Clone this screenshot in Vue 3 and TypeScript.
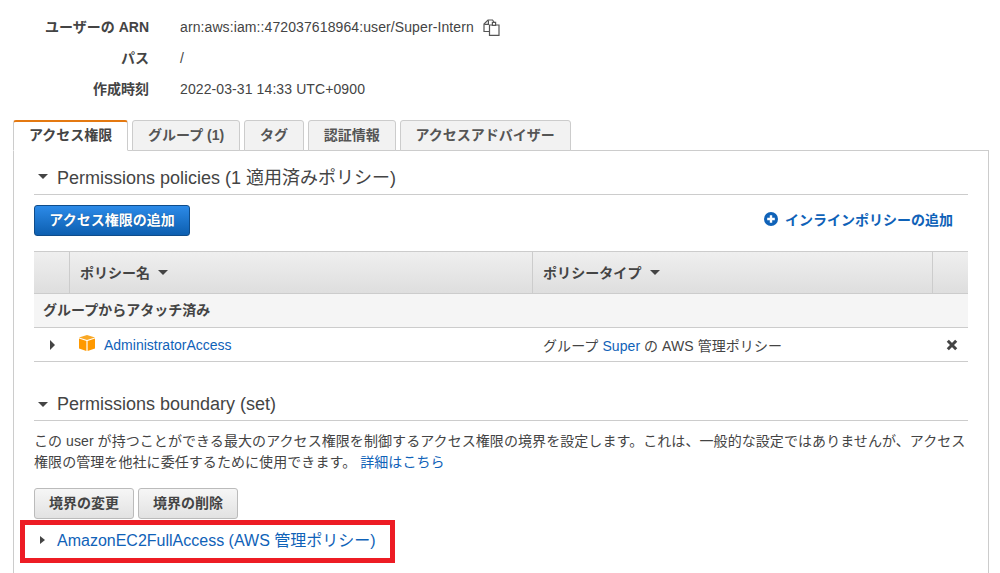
<script setup lang="ts">
const meta = [
  { label: 'ユーザーの ARN', value: 'arn:aws:iam::472037618964:user/Super-Intern', copy: true },
  { label: 'パス', value: '/', copy: false },
  { label: '作成時刻', value: '2022-03-31 14:33 UTC+0900', copy: false },
]
const tabs = ['アクセス権限', 'グループ (1)', 'タグ', '認証情報', 'アクセスアドバイザー']
</script>

<template>
  <div class="page">
    <dl class="meta">
      <div v-for="m in meta" :key="m.label" class="meta-row">
        <dt>{{ m.label }}</dt>
        <dd>
          {{ m.value }}
          <svg v-if="m.copy" class="copy" width="17" height="17" viewBox="0 0 17 17" fill="none" stroke="#555" stroke-width="1.2">
            <path d="M6 12.5H1V5L5 1H9.5L11 3" />
            <path d="M1.2 5.4H5.4V1.2" />
            <path d="M6.5 6H16V16.4H6.5Z" fill="#fff" />
            <path d="M9.4 3.4h3.2V6.4H9.4z" fill="#fff" />
          </svg>
        </dd>
      </div>
    </dl>

    <div class="tabs">
      <div v-for="(t, i) in tabs" :key="t" class="tab" :class="{ active: i === 0 }">{{ t }}</div>
    </div>

    <div class="panel">
      <h3 class="section-title"><span class="caret-down"></span>Permissions policies (1 適用済みポリシー)</h3>

      <div class="actions">
        <button class="btn primary">アクセス権限の追加</button>
        <a class="inline-add">
          <svg width="14" height="14" viewBox="0 0 14 14">
            <circle cx="7" cy="7" r="7" fill="#0f62b8" />
            <path d="M3.2 7h7.6M7 3.2v7.6" stroke="#fff" stroke-width="2.4" />
          </svg>
          <span>インラインポリシーの追加</span>
        </a>
      </div>

      <div class="table">
        <div class="thead">
          <div class="c-exp"></div>
          <div class="c-name"><span class="head-label">ポリシー名</span><span class="sort"></span></div>
          <div class="c-type"><span class="head-label">ポリシータイプ</span><span class="sort"></span></div>
          <div class="c-act"></div>
        </div>
        <div class="group">グループからアタッチ済み</div>
        <div class="trow">
          <div class="c-exp"><span class="caret-right"></span></div>
          <div class="c-name">
            <svg class="cube" width="16" height="16" viewBox="0 0 16 16">
              <path d="M8 0 16 2.6 8 5 0 2.6Z" fill="#f9a825" />
              <path d="M0 3.6 7.4 5.9V16L0 13.6Z" fill="#ff9900" />
              <path d="M16 3.6 8.6 5.9V16L16 13.6Z" fill="#ff9900" />
            </svg>
            <a>AdministratorAccess</a>
          </div>
          <div class="c-type">グループ <a>Super</a> の AWS 管理ポリシー</div>
          <div class="c-act">
            <svg width="12" height="12" viewBox="0 0 12 12"><path d="M1.8 1.8 10.2 10.2M10.2 1.8 1.8 10.2" stroke="#444" stroke-width="3" /></svg>
          </div>
        </div>
      </div>

      <h3 class="section-title second"><span class="caret-down"></span>Permissions boundary (set)</h3>
      <p class="desc">この user が持つことができる最大のアクセス権限を制御するアクセス権限の境界を設定します。これは、一般的な設定ではありませんが、アクセス権限の管理を他社に委任するために使用できます。 <a>詳細はこちら</a></p>

      <div class="btn-row">
        <button class="btn">境界の変更</button>
        <button class="btn">境界の削除</button>
      </div>

      <div class="boundary">
        <div class="highlight"></div>
        <span class="caret-right small"></span>
        <a>AmazonEC2FullAccess (AWS 管理ポリシー)</a>
      </div>
    </div>
  </div>
</template>

<style>
html, body { margin: 0; background: #fff; overflow: hidden; }
</style>

<style scoped>
.page {
  width: 1000px;
  height: 573px;
  overflow: hidden;
  padding: 17px 11px 0 13px;
  box-sizing: border-box;
  font-family: "Liberation Sans", "Noto Sans CJK JP", sans-serif;
  font-size: 14px;
  color: #444;
}
a { color: #0f62b8; }
.meta { margin: 0; }
.meta-row { display: flex; height: 31px; line-height: 21px; }
dt { width: 136px; text-align: right; font-weight: 700; color: #444; }
dd { margin: 0 0 0 31px; display: flex; align-items: center; height: 21px; white-space: pre; letter-spacing: 0.1px; }
.copy { margin-left: 5px; }
.tabs { display: flex; gap: 4px; margin-top: 10px; position: relative; z-index: 1; }
.tab {
  height: 29px;
  line-height: 29px;
  padding: 0 14.9px;
  background: #f2f2f2;
  border: 1px solid #ccc;
  border-bottom: 1px solid #ccc;
  border-radius: 3px 3px 0 0;
  font-weight: 700;
  color: #555;
  white-space: nowrap;
}
.tab.active {
  background: #fff;
  border-top: 2px solid #e47911;
  border-bottom: 1px solid #fff;
  height: 28px;
  line-height: 27px;
  color: #444;
}
.panel {
  border: 1px solid #ccc;
  margin-top: -1px;
  padding: 0 20px;
  height: 500px;
}
.section-title {
  margin: 0;
  height: 44px;
  display: flex;
  align-items: center;
  padding-left: 4px;
  font-size: 18px;
  font-weight: 400;
  border-bottom: 1px solid #ccc;
  color: #444;
  box-sizing: border-box;
  padding-top: 7px;
  white-space: nowrap;
}
.section-title.second { margin-top: 24px; height: 35px; padding-top: 2px; }
.caret-down {
  width: 0; height: 0;
  border-left: 5px solid transparent;
  border-right: 5px solid transparent;
  border-top: 5px solid #444;
  margin-right: 9px;
}
.caret-right {
  display: inline-block;
  width: 0; height: 0;
  border-top: 5px solid transparent;
  border-bottom: 5px solid transparent;
  border-left: 5px solid #444;
}
.caret-right.small { border-top-width: 4.5px; border-bottom-width: 4.5px; margin-top: 3px; }
.actions { display: flex; justify-content: space-between; align-items: center; margin-top: 10px; height: 31px; }
.btn {
  height: 31px;
  padding: 0 14px 3px;
  font: 700 14px "Liberation Sans", "Noto Sans CJK JP", sans-serif;
  color: #444;
  background: linear-gradient(#f6f6f6, #e2e2e2);
  border: 1px solid #bbb;
  border-radius: 3px;
}
.btn.primary {
  width: 156px;
  padding: 0 0 3px;
  color: #fff;
  background: linear-gradient(#2c8ae8, #0d5fb0);
  border-color: #0f4c8a;
  text-shadow: 0 0 1px #0b4a8a;
}
.inline-add {
  display: flex;
  align-items: center;
  gap: 7px;
  font-weight: 700;
  margin-right: 15px;
  margin-top: -3px;
}
.table { margin-top: 15px; }
.thead {
  display: flex;
  height: 41px;
  background: linear-gradient(#efefef, #dedede);
  border: 1px solid #ccc;
  border-width: 1px 0;
  font-weight: 700;
}
.thead > div { display: flex; align-items: center; border-right: 1px solid #ccc; box-sizing: border-box; }
.thead > div:last-child { border-right: 0; }
.head-label { margin-top: -1px; }
.c-exp { width: 36px; flex: none; box-sizing: border-box; padding-left: 16px; }
.c-name { width: 463px; flex: none; box-sizing: border-box; padding-left: 10px; }
.c-type { width: 400px; flex: none; box-sizing: border-box; padding-left: 10px; letter-spacing: 0.07px; }
.c-act { flex: 1; }
.sort {
  width: 0; height: 0;
  margin-left: 8px;
  border-left: 5px solid transparent;
  border-right: 5px solid transparent;
  border-top: 5px solid #444;
}
.group {
  height: 33px;
  line-height: 32px;
  background: #f5f5f5;
  padding-left: 9px;
  border-bottom: 1px solid #ccc;
  font-weight: 700;
}
.trow {
  display: flex;
  height: 33px;
  align-items: center;
  border-bottom: 1px solid #ccc;
}
.trow .c-name { display: flex; align-items: center; gap: 9px; padding-left: 9px; }
.trow .c-act { display: flex; justify-content: center; padding-left: 2px; }
.cube { margin-top: -3px; }
.desc { margin: 10px 0 0; line-height: 21px; width: 934px; letter-spacing: 0.07px; }
.btn-row { display: flex; gap: 4px; margin-top: 15px; }
.boundary {
  position: relative;
  display: flex;
  align-items: center;
  height: 31px;
  margin-top: 4px;
  padding-left: 6px;
  font-size: 16px;
}
.boundary .caret-right { margin-right: 12px; }
.highlight {
  position: absolute;
  left: -14px;
  top: -3px;
  width: 375px;
  height: 43px;
  box-sizing: border-box;
  border: 5px solid #ed1c24;
}
</style>
